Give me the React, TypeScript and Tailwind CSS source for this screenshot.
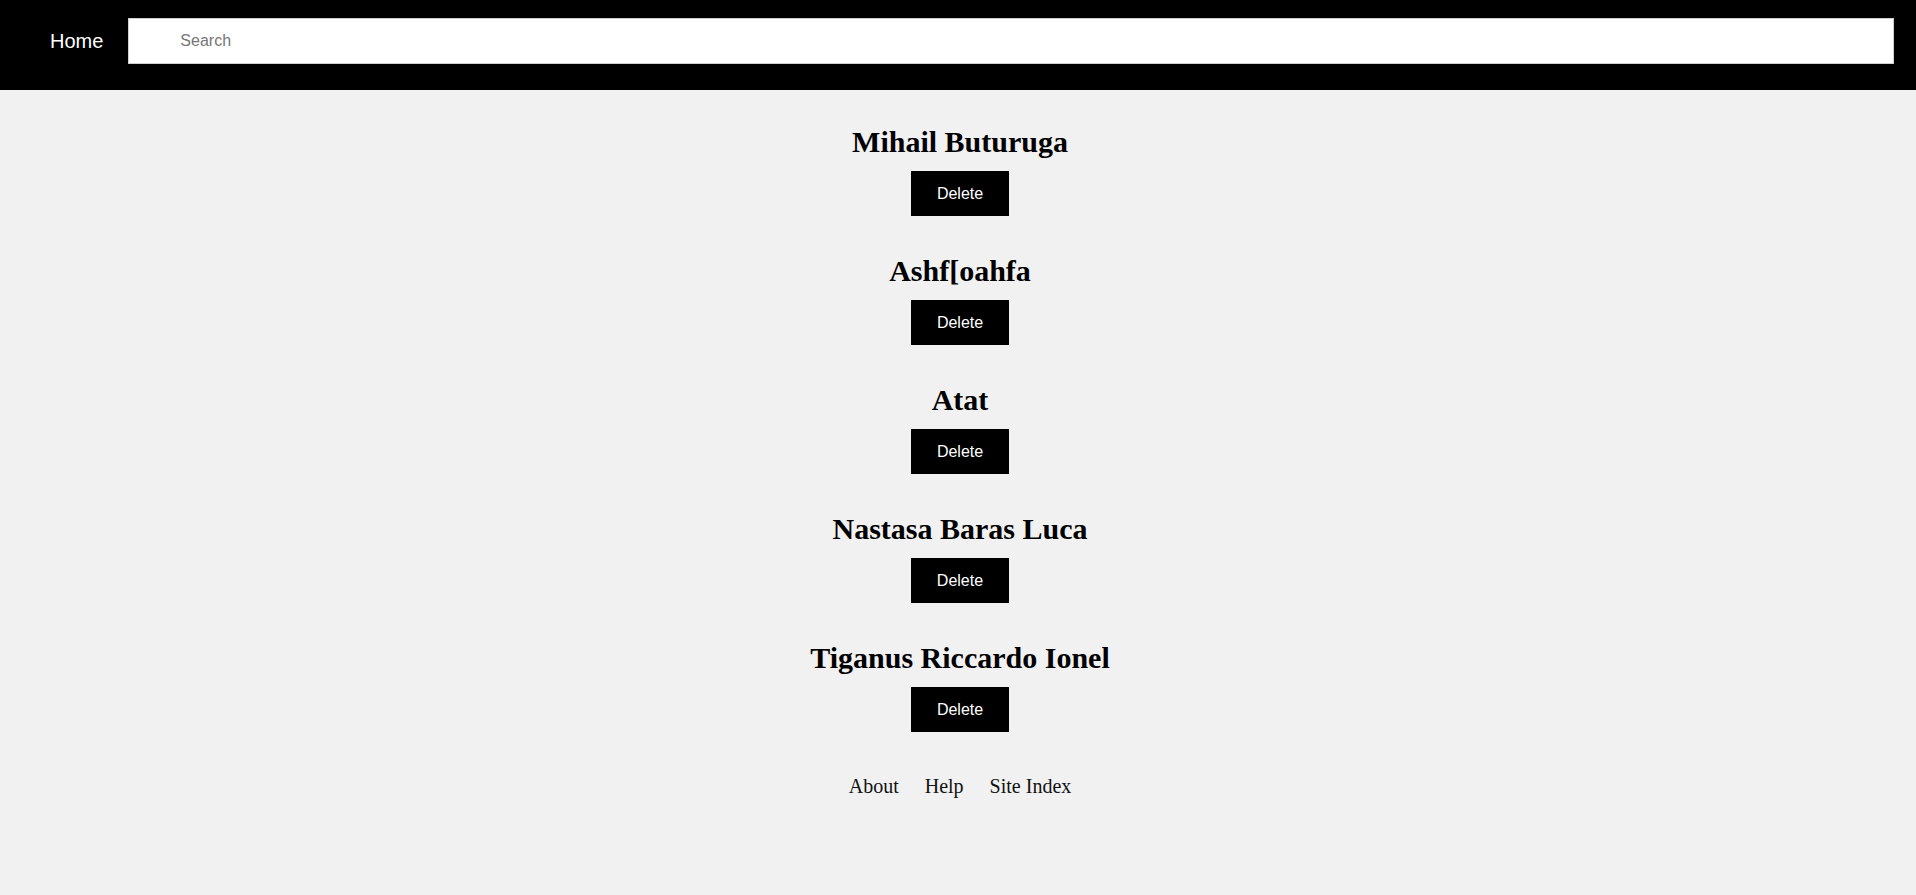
import React from "react";

const people = [
  "Mihail Buturuga",
  "Ashf[oahfa",
  "Atat",
  "Nastasa Baras Luca",
  "Tiganus Riccardo Ionel",
];

export default function App() {
  return (
    <div className="min-h-[895px] bg-[#f1f1f1]">
      {/* Top bar */}
      <header className="flex items-center bg-black pl-[50px] pr-[22px] pt-[18px] pb-[26px] font-['Liberation_Sans',Arial,sans-serif]">
        <a href="#" className="text-[20px] leading-[23px] text-white">
          Home
        </a>
        <input
          type="text"
          placeholder="Search"
          className="ml-[25px] h-[46px] flex-1 border border-[#cfcfcf] bg-white pl-[51px] text-[16px] text-black outline-none placeholder:text-[#767676]"
        />
      </header>

      {/* People list */}
      <main className="flex flex-col items-center pt-[35px] pl-[4px]">
        <div className="flex flex-col items-center gap-[38px]">
          {people.map((name) => (
            <div key={name} className="flex flex-col items-center">
              <h2 className="text-[30px] leading-[34px] font-bold text-black font-['Liberation_Serif','Times_New_Roman',serif]">
                {name}
              </h2>
              <button className="mt-[12px] h-[45px] w-[98px] bg-black text-[16px] text-white font-['Liberation_Sans',Arial,sans-serif]">
                Delete
              </button>
            </div>
          ))}
        </div>

        <footer className="mt-[43px] flex gap-[26px] text-[20px] leading-[23px] text-[#111] font-['Liberation_Serif','Times_New_Roman',serif]">
          <a href="#">About</a>
          <a href="#">Help</a>
          <a href="#">Site Index</a>
        </footer>
      </main>
    </div>
  );
}
